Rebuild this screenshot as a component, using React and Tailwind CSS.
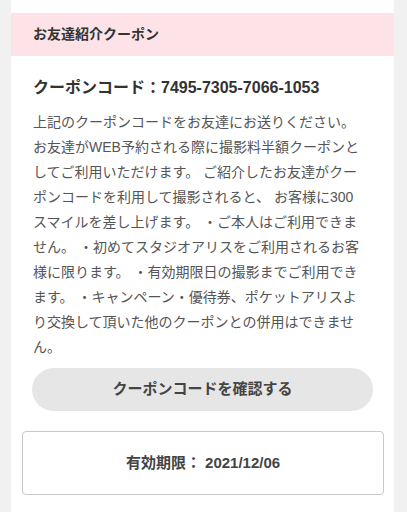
import React from "react";

const lines = [
  "上記のクーポンコードをお友達にお送りください。",
  "お友達がWEB予約される際に撮影料半額クーポンと",
  "してご利用いただけます。 ご紹介したお友達がクー",
  "ポンコードを利用して撮影されると、 お客様に300",
  "スマイルを差し上げます。 ・ご本人はご利用できま",
  "せん。 ・初めてスタジオアリスをご利用されるお客",
  "様に限ります。 ・有効期限日の撮影までご利用でき",
  "ます。 ・キャンペーン・優待券、ポケットアリスよ",
  "り交換して頂いた他のクーポンとの併用はできませ",
  "ん。",
];

export default function App() {
  return (
    <div
      className="min-h-[512px] bg-[#f1f1f1] pl-[11px] pr-[13px]"
      style={{ fontFamily: '"Liberation Sans", "Noto Sans CJK JP", sans-serif' }}
    >
      <div className="min-h-[512px] bg-white pt-[13px]">
        <div className="flex h-[43px] items-center bg-[#fde3e8] px-[22px]">
          <span className="text-[14px] font-bold text-[#333]">お友達紹介クーポン</span>
        </div>
        <div className="px-[22px]">
          <p className="mt-[20px] text-[16px] font-bold leading-[24px] text-[#333]">
            クーポンコード：7495-7305-7066-1053
          </p>
          <p className="mt-[10px] whitespace-nowrap text-[14px] leading-[25px] text-[#555]">
            {lines.map((l, i) => (
              <React.Fragment key={i}>
                {l}
                {i < lines.length - 1 && <br />}
              </React.Fragment>
            ))}
          </p>
        </div>
        <div className="mt-[8px] px-[21px]">
          <div className="flex h-[43px] items-center justify-center rounded-full bg-[#e6e6e6]">
            <span className="text-[15px] font-bold text-[#444]">クーポンコードを確認する</span>
          </div>
        </div>
        <div className="mt-[20px] pl-[11px] pr-[10px]">
          <div className="flex h-[64px] items-center justify-center rounded-[4px] border-[1.5px] border-[#c9c9c9]">
            <span className="text-[15px] font-bold text-[#444]">有効期限： 2021/12/06</span>
          </div>
        </div>
      </div>
    </div>
  );
}
